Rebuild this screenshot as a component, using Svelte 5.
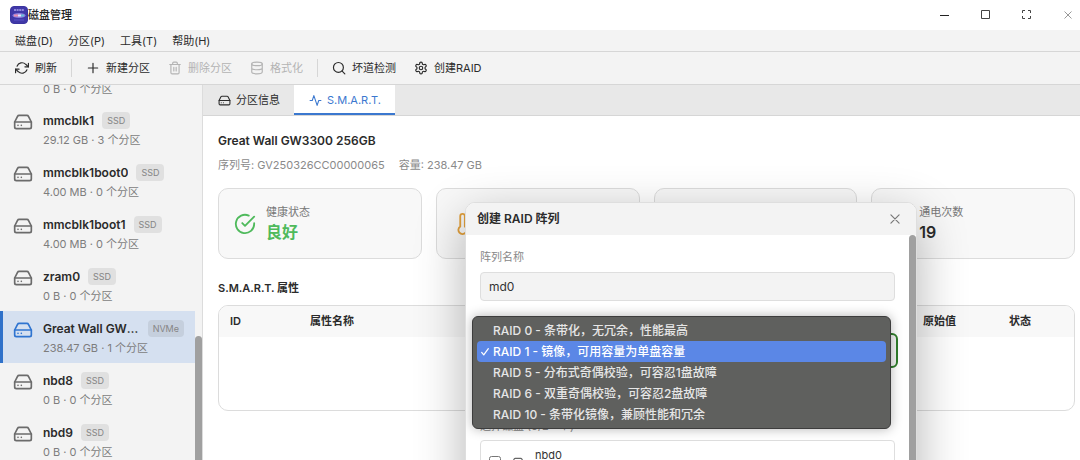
<script>
  let disks = $state([
    { name: '', type: 'SSD', size: '0 B', parts: 0 },
    { name: 'mmcblk1', type: 'SSD', size: '29.12 GB', parts: 3 },
    { name: 'mmcblk1boot0', type: 'SSD', size: '4.00 MB', parts: 0 },
    { name: 'mmcblk1boot1', type: 'SSD', size: '4.00 MB', parts: 0 },
    { name: 'zram0', type: 'SSD', size: '0 B', parts: 0 },
    { name: 'Great Wall GW3300 256GB', type: 'NVMe', size: '238.47 GB', parts: 1 },
    { name: 'nbd8', type: 'SSD', size: '0 B', parts: 0 },
    { name: 'nbd9', type: 'SSD', size: '0 B', parts: 0 },
  ])
  let selected = $state(5)

  const menus = ['磁盘(D)', '分区(P)', '工具(T)', '帮助(H)']

  const levels = [
    { value: '0', label: 'RAID 0 - 条带化，无冗余，性能最高' },
    { value: '1', label: 'RAID 1 - 镜像，可用容量为单盘容量' },
    { value: '5', label: 'RAID 5 - 分布式奇偶校验，可容忍1盘故障' },
    { value: '6', label: 'RAID 6 - 双重奇偶校验，可容忍2盘故障' },
    { value: '10', label: 'RAID 10 - 条带化镜像，兼顾性能和冗余' },
  ]
  let level = $state('1')
  let arrayName = $state('md0')
</script>

{#snippet icon(name, size)}
  <svg
    width={size}
    height={size}
    viewBox="0 0 24 24"
    fill="none"
    stroke="currentColor"
    stroke-width="2"
    stroke-linecap="round"
    stroke-linejoin="round"
    aria-hidden="true"
  >
    {#if name === 'drive'}
      <path d="M22 12H2" />
      <path d="M5.45 5.11 2 12v6a2 2 0 0 0 2 2h16a2 2 0 0 0 2-2v-6l-3.45-6.89A2 2 0 0 0 16.76 4H7.24a2 2 0 0 0-1.79 1.11z" />
      <path d="M6 16h.01M10 16h.01" />
    {:else if name === 'refresh'}
      <path d="M23 4v6h-6M1 20v-6h6" />
      <path d="M3.51 9a9 9 0 0 1 14.85-3.36L23 10M1 14l4.64 4.36A9 9 0 0 0 20.49 15" />
    {:else if name === 'plus'}
      <path d="M12 4v16M4 12h16" />
    {:else if name === 'trash'}
      <path d="M3 6h18M19 6v14a2 2 0 0 1-2 2H7a2 2 0 0 1-2-2V6m3 0V4a2 2 0 0 1 2-2h4a2 2 0 0 1 2 2v2" />
      <path d="M10 11v6M14 11v6" />
    {:else if name === 'database'}
      <ellipse cx="12" cy="5" rx="9" ry="3" />
      <path d="M21 12c0 1.66-4 3-9 3s-9-1.34-9-3M3 5v14c0 1.66 4 3 9 3s9-1.34 9-3V5" />
    {:else if name === 'search'}
      <circle cx="11" cy="11" r="8.5" />
      <path d="m22 22-4.6-4.6" />
    {:else if name === 'gear'}
      <path d="M12.22 2h-.44a2 2 0 0 0-2 2v.18a2 2 0 0 1-1 1.73l-.43.25a2 2 0 0 1-2 0l-.15-.08a2 2 0 0 0-2.73.73l-.22.38a2 2 0 0 0 .73 2.73l.15.1a2 2 0 0 1 1 1.72v.51a2 2 0 0 1-1 1.74l-.15.09a2 2 0 0 0-.73 2.73l.22.38a2 2 0 0 0 2.73.73l.15-.08a2 2 0 0 1 2 0l.43.25a2 2 0 0 1 1 1.73V20a2 2 0 0 0 2 2h.44a2 2 0 0 0 2-2v-.18a2 2 0 0 1 1-1.73l.43-.25a2 2 0 0 1 2 0l.15.08a2 2 0 0 0 2.73-.73l.22-.39a2 2 0 0 0-.73-2.73l-.15-.08a2 2 0 0 1-1-1.74v-.5a2 2 0 0 1 1-1.74l.15-.09a2 2 0 0 0 .73-2.73l-.22-.38a2 2 0 0 0-2.73-.73l-.15.08a2 2 0 0 1-2 0l-.43-.25a2 2 0 0 1-1-1.73V4a2 2 0 0 0-2-2z" />
      <circle cx="12" cy="12" r="3" />
    {:else if name === 'activity'}
      <path d="M22 12h-4l-3 9L9 3l-3 9H2" />
    {:else if name === 'check-circle'}
      <path d="M22 11.08V12a10 10 0 1 1-5.93-9.14" />
      <path d="M22 4 12 14.01l-3-3" />
    {:else if name === 'thermometer'}
      <path d="M14 14.76V3.5a2.5 2.5 0 0 0-5 0v11.26a4.5 4.5 0 1 0 5 0z" />
    {:else if name === 'power'}
      <path d="M18.36 6.64a9 9 0 1 1-12.73 0M12 2v10" />
    {:else if name === 'close'}
      <path d="M19 5 5 19M5 5l14 14" />
    {:else if name === 'check'}
      <path d="m4 13 5 6L20 4" stroke-width="3" />
    {/if}
  </svg>
{/snippet}

<div class="app">
  <header class="titlebar">
    <svg class="logo" width="18" height="18" viewBox="0 0 18 18" aria-hidden="true">
      <rect x="0.5" y="0.5" width="17" height="17" rx="3.5" fill="#4038a8" stroke="#3a34a0" />
      <path d="M4 4h10" stroke="#a9a2ec" stroke-width="1.5" stroke-dasharray="2 0.6" />
      <ellipse cx="9" cy="9.5" rx="6.5" ry="2.6" fill="#8e7fdd" />
      <path d="M4 9.5h4" stroke="#e98fb0" stroke-width="2" />
      <path d="M8 9.5h3" stroke="#e8e3ff" stroke-width="2" />
      <path d="M11 9.5h3" stroke="#67c3d8" stroke-width="2" />
      <path d="M4 14h10" stroke="#5d55c8" />
    </svg>
    <span class="app-name">磁盘管理</span>
    <div class="window-buttons">
      <button type="button" aria-label="最小化">
        <svg width="12" height="12" viewBox="0 0 12 12"><path d="M1 6.5h9" stroke="#222" /></svg>
      </button>
      <button type="button" aria-label="最大化">
        <svg width="12" height="12" viewBox="0 0 12 12"><path d="M1.500 1.500h8v8h-8z" fill="none" stroke="#444" /></svg>
      </button>
      <button type="button" aria-label="全屏">
        <svg width="12" height="12" viewBox="0 0 12 12"><path d="M4 1.500H1.500V4M7 1.500h2.500V4M4 9.500H1.500V7M7 9.500h2.500V7" fill="none" stroke="#444" /></svg>
      </button>
      <button type="button" aria-label="关闭">
        <svg width="12" height="12" viewBox="0 0 12 12"><path d="m2.500 2.500 7 7M9.500 2.500l-7 7" stroke="#999" /></svg>
      </button>
    </div>
  </header>

  <nav class="menubar">
    {#each menus as menu}
      <button type="button">{menu}</button>
    {/each}
  </nav>

  <div class="toolbar">
    <button type="button">{@render icon('refresh', 14)}刷新</button>
    <span class="sep"></span>
    <button type="button">{@render icon('plus', 14)}新建分区</button>
    <button type="button" disabled>{@render icon('trash', 14)}删除分区</button>
    <button type="button" disabled>{@render icon('database', 14)}格式化</button>
    <span class="sep"></span>
    <button type="button">{@render icon('search', 14)}坏道检测</button>
    <button type="button">{@render icon('gear', 14)}创建RAID</button>
  </div>

  <div class="body">
    <aside class="sidebar">
      <div class="disk-list">
        {#each disks as disk, i}
          <button
            type="button"
            class="disk"
            class:active={i === selected}
            class:tail={!disk.name}
            onclick={() => (selected = i)}
          >
            {#if disk.name}{@render icon('drive', 20)}{/if}
            <span class="disk-text">
              {#if disk.name}
                <span class="disk-head">
                  <span class="disk-name">{disk.name}</span>
                  <span class="badge">{disk.type}</span>
                </span>
              {/if}
              <span class="disk-meta">{disk.size} · {disk.parts} 个分区</span>
            </span>
          </button>
        {/each}
      </div>
      <div class="track"><div class="thumb"></div></div>
    </aside>

    <main class="main">
      <div class="tabs" role="tablist">
        <button type="button" role="tab" aria-selected="false">{@render icon('drive', 13)}分区信息</button>
        <button type="button" role="tab" aria-selected="true" class="current">{@render icon('activity', 13)}S.M.A.R.T.</button>
      </div>

      <section class="content">
        <h2>Great Wall GW3300 256GB</h2>
        <p class="serial"><span>序列号: GV250326CC00000065</span><span>容量: 238.47 GB</span></p>

        <div class="cards">
          <div class="card good">
            {@render icon('check-circle', 22)}
            <div><span class="label">健康状态</span><strong>良好</strong></div>
          </div>
          <div class="card warm">
            {@render icon('thermometer', 22)}
          </div>
          <div class="card"></div>
          <div class="card">
            {@render icon('power', 22)}
            <div><span class="label">通电次数</span><strong>19</strong></div>
          </div>
        </div>

        <h3>S.M.A.R.T. 属性</h3>
        <div class="table-box">
          <table>
            <thead>
              <tr>
                <th class="col-id">ID</th>
                <th>属性名称</th>
                <th class="col-raw">原始值</th>
                <th class="col-state">状态</th>
              </tr>
            </thead>
          </table>
        </div>
      </section>
    </main>
  </div>

  <div class="dialog" role="dialog" aria-labelledby="dialog-title">
    <div class="dialog-head">
      <h2 id="dialog-title">创建 RAID 阵列</h2>
      <button type="button" aria-label="关闭">{@render icon('close', 14)}</button>
    </div>
    <div class="dialog-main">
      <form class="dialog-form">
        <label for="array-name">阵列名称</label>
        <input id="array-name" type="text" bind:value={arrayName} />

        <div class="level">
          <select aria-label="RAID" bind:value={level}>
            {#each levels as item}
              <option value={item.value}>{item.label}</option>
            {/each}
          </select>
          <ul class="popup" role="listbox" aria-label="RAID">
            {#each levels as item}
              <li role="option" aria-selected={item.value === level}>
                <button type="button" class:picked={item.value === level} onclick={() => (level = item.value)}>
                  <span class="tick">{#if item.value === level}{@render icon('check', 10)}{/if}</span>
                  {item.label}
                </button>
              </li>
            {/each}
          </ul>
        </div>

        <p class="pick-label">选择磁盘 (0/2+ 个)</p>
        <div class="pick-list">
          <label class="pick">
            <input type="checkbox" />
            {@render icon('drive', 14)}
            <span>nbd0</span>
          </label>
        </div>
      </form>
      <div class="track"><div class="thumb"></div></div>
    </div>
  </div>
</div>

<style>
  :global(body) {
    margin: 0;
  }
  .app {
    position: relative;
    display: flex;
    flex-direction: column;
    height: 100vh;
    overflow: hidden;
    background: #f3f3f3;
    color: #2b2b2b;
    font-family: Inter, 'Noto Sans CJK SC', sans-serif;
    font-size: 11px;
    line-height: 16px;
  }
  .app *,
  .app {
    box-sizing: border-box;
  }
  button {
    border: 0;
    padding: 0;
    background: none;
    color: inherit;
    font: inherit;
    cursor: pointer;
  }
  svg {
    display: block;
    flex: none;
  }
  h2,
  h3,
  p,
  ul {
    margin: 0;
    padding: 0;
  }

  .titlebar {
    display: flex;
    align-items: center;
    flex: none;
    height: 30px;
    padding: 0 6px 0 10px;
    background: #fff;
  }
  .app-name {
    font-weight: 500;
    color: #222;
  }
  .window-buttons {
    display: flex;
    gap: 29px;
    margin-left: auto;
  }

  .menubar {
    display: flex;
    flex: none;
    align-items: center;
    gap: 15px;
    height: 22px;
    padding: 0 15px;
    border-bottom: 1px solid #d6d6d6;
  }

  .toolbar {
    display: flex;
    flex: none;
    align-items: center;
    gap: 2px;
    height: 33px;
    padding: 0 7px;
    border-bottom: 1px solid #d6d6d6;
  }
  .toolbar button {
    display: flex;
    align-items: center;
    gap: 6px;
    padding: 4px 8px;
  }
  .toolbar button:disabled {
    color: #b4b4b4;
    cursor: default;
  }
  .sep {
    width: 1px;
    height: 18px;
    margin: 0 4px;
    background: #d6d6d6;
  }

  .body {
    display: flex;
    flex: 1;
    min-height: 0;
  }
  .sidebar {
    display: flex;
    flex: none;
    width: 203px;
    overflow: hidden;
    border-right: 1px solid #dcdcdc;
  }
  .disk-list {
    flex: 1;
    min-width: 0;
  }
  .disk {
    display: flex;
    gap: 10px;
    width: 100%;
    height: 52px;
    padding: 9px 11px 0 10px;
    border-left: 3px solid transparent;
    text-align: left;
    color: #6b6b6b;
  }
  /* last line of a row that is scrolled out above */
  .disk.tail {
    height: 18px;
    padding: 0 11px 0 40px;
  }
  .tail .disk-meta {
    margin-top: -4px;
  }
  .disk.active {
    border-left-color: #2f71c9;
    background: #d5e0f0;
    color: #2f74d0;
  }
  .disk-text {
    flex: 1;
    min-width: 0;
  }
  .disk-head {
    display: flex;
    align-items: center;
    gap: 8px;
  }
  .disk-name {
    overflow: hidden;
    white-space: nowrap;
    text-overflow: ellipsis;
    font-size: 12px;
    font-weight: 600;
    line-height: 17px;
    color: #2b2b2b;
  }
  .badge {
    flex: none;
    padding: 0 5px;
    border-radius: 4px;
    background: #e0e0e0;
    color: #858585;
    font-size: 9px;
    line-height: 17px;
  }
  .active .badge {
    background: #c5cfdd;
  }
  .disk-meta {
    display: block;
    margin-top: 3px;
    color: #7d7d7d;
  }
  .track {
    display: flex;
    flex: none;
    width: 7px;
  }
  .thumb {
    width: 7px;
    border-radius: 4px 4px 0 0;
    background: #a0a0a0;
  }
  .sidebar .thumb {
    height: 33%;
    margin-top: auto;
  }

  .main {
    display: flex;
    flex: 1;
    flex-direction: column;
    min-width: 0;
    background: #fff;
  }
  .tabs {
    display: flex;
    flex: none;
    height: 31px;
    border-bottom: 1px solid #d6d6d6;
    background: #e8e8e8;
  }
  .tabs button {
    display: flex;
    align-items: center;
    gap: 5px;
    padding: 2px 14px 0 15px;
    border-bottom: 2px solid transparent;
  }
  .tabs .current {
    border-bottom-color: #3b78cf;
    background: #fff;
    color: #3b78cf;
  }

  .content {
    padding: 17px 5px 0 15px;
  }
  .content h2 {
    font-size: 12px;
    line-height: 16px;
    font-weight: 600;
  }
  .serial {
    display: flex;
    gap: 14px;
    margin-top: 8px;
    color: #8a8a8a;
  }
  .cards {
    display: grid;
    grid-template-columns: repeat(4, 1fr);
    gap: 14px;
    margin-top: 15px;
  }
  .card {
    display: flex;
    align-items: center;
    gap: 10px;
    height: 71px;
    padding: 0 15px;
    border: 1px solid #dcdcdc;
    border-radius: 10px;
    background: #f8f8f8;
  }
  .card .label {
    display: block;
    color: #777;
  }
  .card strong {
    display: block;
    font-size: 16px;
    line-height: 24px;
    font-weight: 600;
  }
  .good,
  .good strong {
    color: #4fba5c;
  }
  .warm {
    color: #e2a03c;
  }
  .content h3 {
    margin-top: 21px;
    font-size: 11px;
    font-weight: 600;
  }
  .table-box {
    min-height: 106px;
    margin-top: 9px;
    overflow: hidden;
    border: 1px solid #dcdcdc;
    border-radius: 10px;
  }
  table {
    width: 100%;
    border-collapse: collapse;
    table-layout: fixed;
  }
  th {
    padding: 7px 11px 8px;
    background: #f8f8f8;
    text-align: left;
    font-weight: 600;
  }
  .col-id {
    width: 80px;
  }
  .col-raw {
    width: 86px;
  }
  .col-state {
    width: 76px;
  }

  .dialog {
    position: absolute;
    top: 202px;
    left: 465px;
    display: flex;
    flex-direction: column;
    width: 452px;
    height: 420px;
    overflow: hidden;
    border: 1px solid #dedede;
    border-radius: 10px;
    background: #fff;
    box-shadow: 0 16px 50px rgba(0, 0, 0, 0.3);
  }
  .dialog-head {
    display: flex;
    flex: none;
    align-items: center;
    justify-content: space-between;
    height: 32px;
    padding: 0 14px 0 11px;
    background: #f3f3f3;
  }
  .dialog-head h2 {
    font-size: 12px;
    font-weight: 600;
  }
  .dialog-head button {
    color: #777;
  }
  .dialog-main {
    display: flex;
    flex: 1;
  }
  .dialog-main .thumb {
    height: 100%;
  }
  .dialog-form {
    flex: 1;
    min-width: 0;
    padding: 14px 14px 0;
    color: #888;
  }
  .dialog-form > label {
    display: block;
  }
  #array-name {
    display: block;
    width: 100%;
    height: 29px;
    margin-top: 7px;
    padding: 0 8px;
    border: 1px solid #dedede;
    border-radius: 4px;
    background: #f3f3f3;
    color: #333;
    font: inherit;
    font-size: 12px;
  }
  .level {
    position: relative;
    margin: 32px -3px 0;
  }
  select {
    display: block;
    width: 100%;
    height: 35px;
    padding: 0 8px;
    border: 2px solid #2f7d2a;
    border-radius: 6px;
    background: #f3f3f3;
    color: #333;
    font: inherit;
    appearance: none;
  }
  .popup {
    position: absolute;
    top: -17px;
    left: -5px;
    right: 7px;
    padding: 3px 4px;
    border: 1px solid #3d3d3d;
    border-radius: 6px;
    background: #5f605e;
    box-shadow: 0 0 12px rgba(0, 0, 0, 0.3);
    list-style: none;
  }
  .popup button {
    display: flex;
    align-items: center;
    width: 100%;
    height: 21px;
    padding: 0 3px;
    border-radius: 4px;
    color: #e6e6e6;
    font-size: 12px;
    font-weight: 500;
    white-space: nowrap;
  }
  .popup .picked {
    background: #5b87e6;
    color: #fff;
  }
  .tick {
    width: 13px;
  }
  .pick-label {
    margin-top: 50px;
  }
  .pick-list {
    height: 120px;
    margin-top: 6px;
    padding: 6px 8px;
    border: 1px solid #dedede;
    border-radius: 4px;
  }
  .pick {
    display: flex;
    gap: 10px;
    color: #333;
  }
  .pick input {
    width: 12px;
    height: 12px;
    margin: 9px 0 0;
  }
  .pick svg {
    margin-top: 9px;
    color: #666;
  }
</style>
